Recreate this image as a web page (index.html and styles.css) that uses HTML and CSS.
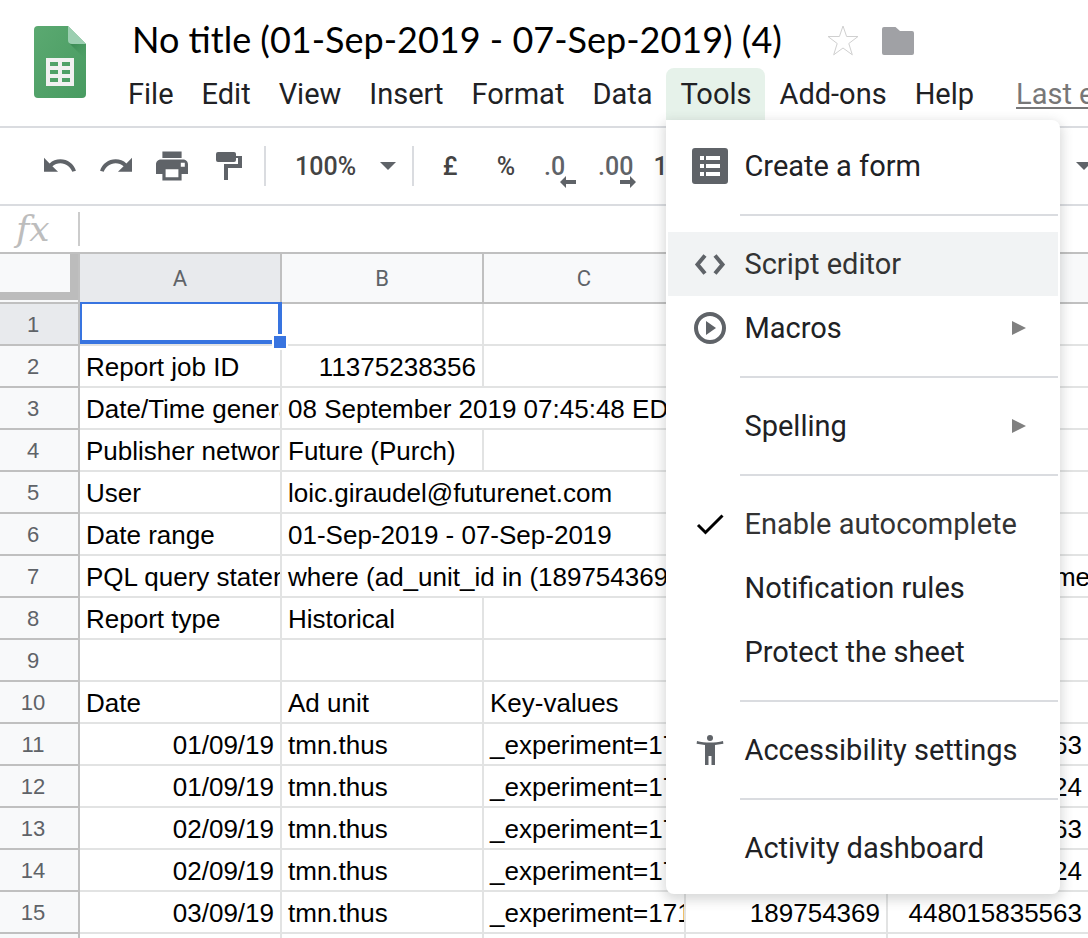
FILE: index.html
```html
<!DOCTYPE html>
<html lang="en">
<head>
<meta charset="utf-8">
<title>No title (01-Sep-2019 - 07-Sep-2019) (4)</title>
<link rel="stylesheet" href="styles.css">
</head>
<body>
<header class="header">
  <svg class="logo" viewBox="0 0 52 72" aria-hidden="true">
    <defs>
      <linearGradient id="paper" x1="0" y1="0" x2="1" y2="1"><stop offset="0" stop-color="#5ba971"/><stop offset="1" stop-color="#489b61"/></linearGradient>
      <linearGradient id="shade" x1="0" y1="0" x2="1" y2="1"><stop offset="0" stop-color="#2f7d49" stop-opacity=".75"/><stop offset="1" stop-color="#489b61" stop-opacity="0"/></linearGradient>
    </defs>
    <path fill="url(#paper)" d="M4 0h30l18 18v50a4 4 0 0 1-4 4H4a4 4 0 0 1-4-4V4a4 4 0 0 1 4-4z"/>
    <path fill="url(#shade)" d="M35 17l17 17V18z"/>
    <path fill="#9ccfb1" d="M34 0l18 18H38a4 4 0 0 1-4-4z"/>
    <path fill="#f1f1f1" fill-rule="evenodd" d="M12 32h28v28H12zM16 36v4h8v-4zM28 36v4h8v-4zM16 44v4h8v-4zM28 44v4h8v-4zM16 52v4h8v-4zM28 52v4h8v-4z"/>
  </svg>
  <div class="header-main">
    <div class="title-row">
      <h1 class="title">No title (01-Sep-2019 - 07-Sep-2019) (4)</h1>
      <button class="title-btn" aria-label="Star"><svg viewBox="0 0 32 32"><path fill="none" stroke="#d0d0d0" d="M16 2l3.600 10.500H31l-9.200 7 3.500 11.300L16 24l-9.300 6.800 3.500-11.300-9.200-7h11.400z"/></svg></button>
      <button class="title-btn" aria-label="Move to folder"><svg viewBox="0 0 32 32"><path fill="#a0a1a5" d="M2 3h11.500l4.500 4h12a2 2 0 0 1 2 2v20a2 2 0 0 1-2 2H2a2 2 0 0 1-2-2V5a2 2 0 0 1 2-2z"/></svg></button>
    </div>
    <nav class="menubar">
      <button class="menu-btn">File</button>
      <button class="menu-btn">Edit</button>
      <button class="menu-btn">View</button>
      <button class="menu-btn">Insert</button>
      <button class="menu-btn">Format</button>
      <button class="menu-btn">Data</button>
      <div class="menu-anchor">
        <button class="menu-btn menu-btn-open" aria-expanded="true">Tools</button>
        <div class="menu" role="menu">
          <button class="item" role="menuitem"><span class="item-icon"><svg viewBox="0 0 36 36"><path fill="#5f6368" fill-rule="evenodd" d="M3 0h30a3 3 0 0 1 3 3v30a3 3 0 0 1-3 3H3a3 3 0 0 1-3-3V3a3 3 0 0 1 3-3zM8 8v4h4V8zM14 8v4h14V8zM8 16v4h4v-4zM14 16v4h14v-4zM8 24v4h4v-4zM14 24v4h14v-4z"/></svg></span>Create a form</button>
          <hr class="rule">
          <button class="item item-hover" role="menuitem"><span class="item-icon"><svg viewBox="0 0 36 36"><path fill="none" stroke="#5f6368" stroke-width="4" d="M13 9.500L5.500 18.500l7.500 9M23 9.500l7.500 9-7.500 9"/></svg></span>Script editor</button>
          <button class="item" role="menuitem"><span class="item-icon"><svg viewBox="0 0 36 36"><circle cx="18" cy="18" r="14" fill="none" stroke="#5f6368" stroke-width="4"/><path fill="#5f6368" d="M14 11l10 7-10 7z"/></svg></span>Macros<svg class="arrow" viewBox="0 0 14 14"><path fill="#808080" d="M0 0l14 7-14 7z"/></svg></button>
          <hr class="rule">
          <button class="item" role="menuitem"><span class="item-icon"></span>Spelling<svg class="arrow" viewBox="0 0 14 14"><path fill="#808080" d="M0 0l14 7-14 7z"/></svg></button>
          <hr class="rule">
          <button class="item item-soft" role="menuitemcheckbox" aria-checked="true"><span class="item-icon"><svg viewBox="0 0 36 36"><path fill="none" stroke="#000" stroke-width="3" d="M6 19l7.500 7.500L30.500 9.500"/></svg></span>Enable autocomplete</button>
          <button class="item" role="menuitem"><span class="item-icon"></span>Notification rules</button>
          <button class="item" role="menuitem"><span class="item-icon"></span>Protect the sheet</button>
          <hr class="rule">
          <button class="item" role="menuitem"><span class="item-icon"><svg viewBox="0 0 36 36"><g fill="#5f6368"><circle cx="18" cy="6" r="3"/><path d="M5 9c8 2 18 2 26 0l.4 2.800L23 13v20h-3.500v-9h-3v9H13V13l-8.400-1.200z"/></g></svg></span>Accessibility settings</button>
          <hr class="rule">
          <button class="item" role="menuitem"><span class="item-icon"></span>Activity dashboard</button>
        </div>
      </div>
      <button class="menu-btn">Add-ons</button>
      <button class="menu-btn">Help</button>
      <a class="last-edit" href="#">Last edit</a>
    </nav>
  </div>
</header>

<div class="toolbar">
  <button class="tool" aria-label="Undo"><svg viewBox="2 2 20.500 20.500"><path d="M12.500 8c-2.650 0-5.050.99-6.900 2.600L2 7v9h9l-3.620-3.620c1.390-1.160 3.160-1.880 5.120-1.880 3.540 0 6.550 2.310 7.600 5.500l2.370-.78C21.080 11.030 17.150 8 12.500 8z"/></svg></button>
  <button class="tool" aria-label="Redo"><svg viewBox="1.500 2 20.500 20.500"><path d="M18.400 10.600C16.550 8.990 14.150 8 11.500 8c-4.650 0-8.580 3.030-9.960 7.220L3.900 16c1.050-3.190 4.050-5.500 7.600-5.500 1.950 0 3.730.72 5.120 1.880L13 16h9V7l-3.600 3.600z"/></svg></button>
  <button class="tool" aria-label="Print"><svg viewBox="2 2 20 20"><path d="M19 8H5c-1.660 0-3 1.340-3 3v6h4v4h12v-4h4v-6c0-1.660-1.340-3-3-3zm-3 11H8v-5h8v5zm4-6.500h-2.500V10H20zM18 3H6v4h12V3z"/></svg></button>
  <button class="tool" aria-label="Paint format"><svg viewBox="0 0 32 32"><path d="M6 2h16a2 2 0 0 1 2 2v2h6v12H16v12h-4V14h14V8h-2v2a2 2 0 0 1-2 2H6a2 2 0 0 1-2-2V4a2 2 0 0 1 2-2z"/></svg></button>
  <span class="divider"></span>
  <button class="zoom">100%<svg class="caret" viewBox="0 0 16 8"><path d="M0 0h16L8 8z"/></svg></button>
  <span class="divider"></span>
  <div class="formats">
    <button class="tool tool-text">£</button>
    <button class="tool tool-text">%</button>
    <button class="tool tool-text tool-decimal" aria-label="Decrease decimal places">.0<svg class="shift" viewBox="0 0 16 12"><path d="M0 6l6-6v4h10v4H6v4z"/></svg></button>
    <button class="tool tool-text tool-decimal" aria-label="Increase decimal places">.00<svg class="shift shift-far" viewBox="0 0 16 12"><path d="M16 6l-6-6v4H0v4h10v4z"/></svg></button>
    <button class="tool tool-text">123</button>
  </div>
  <button class="more" aria-label="More"><svg class="caret" viewBox="0 0 16 8"><path d="M0 0h16L8 8z"/></svg></button>
</div>

<div class="formula">
  <label class="fx" for="formula">fx</label>
  <input class="formula-input" id="formula" type="text">
</div>

<main class="sheet">
  <table class="grid">
    <colgroup><col class="col-num"><col class="col"><col class="col"><col class="col"><col class="col"><col class="col"></colgroup>
    <thead>
      <tr><td class="corner"></td><th class="picked">A</th><th>B</th><th>C</th><th>D</th><th>E</th></tr>
    </thead>
    <tbody>
      <tr><th class="picked">1</th><td class="active"><span class="cursor"></span><span class="handle"></span></td><td></td><td></td><td></td><td></td></tr>
      <tr><th>2</th><td>Report job ID</td><td class="num">11375238356</td><td></td><td></td><td></td></tr>
      <tr><th>3</th><td>Date/Time generated</td><td colspan="2">08 September 2019 07:45:48 EDT</td><td></td><td></td></tr>
      <tr><th>4</th><td>Publisher network</td><td>Future (Purch)</td><td></td><td></td><td></td></tr>
      <tr><th>5</th><td>User</td><td colspan="2">loic.giraudel@futurenet.com</td><td></td><td></td></tr>
      <tr><th>6</th><td>Date range</td><td colspan="2">01-Sep-2019 - 07-Sep-2019</td><td></td><td></td></tr>
      <tr><th>7</th><td>PQL query statement</td><td class="spill" colspan="4"><div class="query"><span>where (ad_unit_id in (189754369</span><span>me</span></div></td></tr>
      <tr><th>8</th><td>Report type</td><td>Historical</td><td></td><td></td><td></td></tr>
      <tr><th>9</th><td></td><td></td><td></td><td></td><td></td></tr>
      <tr><th>10</th><td>Date</td><td>Ad unit</td><td>Key-values</td><td></td><td></td></tr>
      <tr><th>11</th><td class="num">01/09/19</td><td>tmn.thus</td><td>_experiment=171</td><td class="num">189754369</td><td class="num">448015835563</td></tr>
      <tr><th>12</th><td class="num">01/09/19</td><td>tmn.thus</td><td>_experiment=171</td><td class="num">189754369</td><td class="num">448015835624</td></tr>
      <tr><th>13</th><td class="num">02/09/19</td><td>tmn.thus</td><td>_experiment=171</td><td class="num">189754369</td><td class="num">448015835563</td></tr>
      <tr><th>14</th><td class="num">02/09/19</td><td>tmn.thus</td><td>_experiment=171</td><td class="num">189754369</td><td class="num">448015835624</td></tr>
      <tr><th>15</th><td class="num">03/09/19</td><td>tmn.thus</td><td>_experiment=171</td><td class="num">189754369</td><td class="num">448015835563</td></tr>
      <tr><th></th><td></td><td></td><td></td><td></td><td></td></tr>
    </tbody>
  </table>
</main>
</body>
</html>
```
FILE: styles.css
```css
* { box-sizing: border-box; }
body {
  margin: 0;
  height: 100vh;
  display: flex;
  flex-direction: column;
  overflow: hidden;
  background: #fff;
  color: #202124;
  font-family: Roboto, "Liberation Sans", sans-serif;
}
button {
  margin: 0;
  padding: 0;
  border: 0;
  background: none;
  color: inherit;
  font: inherit;
  white-space: nowrap;
}
svg { display: block; }

/* Header */
.header {
  display: flex;
  flex: none;
  padding: 0 0 6px 34px;
  border-bottom: 2px solid #dadce0;
}
.logo { flex: none; width: 52px; height: 72px; margin-top: 26px; }
.header-main { flex: 1; min-width: 0; margin-left: 28px; }
.title-row {
  display: flex;
  align-items: center;
  height: 68px;
  padding: 12px 0 0 18px;
}
.title {
  margin: 0 45px 2px 0;
  color: #000;
  font: 400 36px/46px Lato, "Open Sans", sans-serif;
  white-space: nowrap;
}
.title-btn { width: 32px; height: 32px; margin-right: 23px; }
.menubar { display: flex; height: 52px; font-size: 29px; }
.menu-btn { flex: none; height: 52px; padding: 0 14px; }
.menu-anchor { position: relative; flex: none; }
.menu-btn-open { border-radius: 8px 8px 0 0; background: #e6f2ea; }
.last-edit {
  flex: none;
  margin-left: 28px;
  color: #777;
  line-height: 52px;
  white-space: nowrap;
  text-decoration-thickness: 2px;
  text-underline-offset: 3px;
}

/* Tools menu */
.menu {
  position: absolute;
  z-index: 5;
  top: 52px;
  left: 0;
  width: 394px;
  padding: 14px 2px;
  border-radius: 0 8px 8px 8px;
  background: #fff;
  box-shadow: 0 4px 12px 2px rgba(60, 64, 67, .2);
}
.item {
  display: flex;
  align-items: center;
  width: 100%;
  height: 64px;
  padding: 0 32px 0 24px;
  text-align: left;
}
.item-hover { background: #f1f3f4; color: #333; }
.item-soft { color: #333; }
.item-icon { flex: none; width: 36px; height: 36px; margin-right: 16px; }
.arrow { width: 14px; height: 14px; margin-left: auto; }
.rule { height: 2px; margin: 16px 0 16px 72px; border: 0; background: #dadce0; }

/* Toolbar */
.toolbar {
  position: relative;
  display: flex;
  flex: none;
  align-items: center;
  gap: 24px;
  height: 78px;
  padding-left: 44px;
  border-bottom: 2px solid #dadce0;
  color: #444;
  font-size: 25px;
  font-weight: 500;
}
.tool { flex: none; width: 32px; height: 32px; }
.tool svg, .caret { fill: #5f6368; }
.divider { flex: none; width: 2px; height: 40px; margin: 0 4px 0 -4px; background: #dadce0; }
.zoom {
  display: flex;
  align-items: center;
  justify-content: space-between;
  width: 102px;
  height: 36px;
  padding-left: 1px;
  margin-right: -4px;
}
.caret { flex: none; width: 16px; height: 8px; }
.formats { display: flex; align-items: center; gap: 20px; margin-left: -10px; }
.tool-text { width: auto; min-width: 36px; }
.tool-decimal { position: relative; min-width: 34px; color: #5f6368; text-align: left; }
.shift { position: absolute; left: 16px; bottom: -6px; width: 16px; height: 12px; }
.shift-far { left: 22px; }
.more { position: absolute; right: -4px; }

/* Formula bar */
.formula {
  display: flex;
  flex: none;
  align-items: center;
  height: 48px;
  border-bottom: 2px solid #c0c0c0;
}
.fx {
  width: 80px;
  padding-left: 16px;
  border-right: 2px solid #ccc;
  color: #bdbdbd;
  font: italic 36px/34px "DejaVu Serif", "Liberation Serif", serif;
}
.formula-input { flex: 1; min-width: 0; height: 40px; border: 0; outline: 0; background: none; font: 26px "Liberation Sans", sans-serif; }

/* Sheet */
.sheet { flex: 1; min-height: 0; overflow: hidden; }
.grid {
  width: 1090px;
  table-layout: fixed;
  border-spacing: 0;
  color: #000;
  font: 26px/38px "Liberation Sans", Arial, sans-serif;
}
.col-num { width: 80px; }
.col { width: 202px; }
.grid th, .grid td {
  height: 42px;
  padding: 2px 6px 0;
  border-right: 2px solid #e2e3e3;
  border-bottom: 2px solid #e2e3e3;
  overflow: hidden;
  text-align: left;
  white-space: nowrap;
}
.grid th {
  border-color: #c0c0c0;
  background: #f8f9fa;
  color: #5f6368;
  font-size: 22px;
  font-weight: 400;
  text-align: center;
}
.grid thead th { height: 50px; font-family: Roboto, sans-serif; }
.grid tbody th { padding: 2px 12px 0 0; }
.grid .picked { background: #e8eaed; }
.grid .corner {
  height: 50px;
  border-color: #c0c0c0;
  background: #f8f9fa;
  box-shadow: inset 0 -2px #f8f9fa, inset -8px -10px #bcbcbc;
}
.grid .num { text-align: right; }
.grid .spill { padding-right: 0; border-right: 0; }
.query { display: flex; justify-content: space-between; }
.grid .active { position: relative; overflow: visible; }
.cursor {
  position: absolute;
  inset: -2px -2px 0 0;
  border: solid #3874e0;
  border-width: 2px 4px 4px 2px;
}
.handle {
  position: absolute;
  z-index: 1;
  right: -8px;
  bottom: -6px;
  width: 16px;
  height: 16px;
  border: 2px solid #fff;
  background: #3874e0;
}
```
